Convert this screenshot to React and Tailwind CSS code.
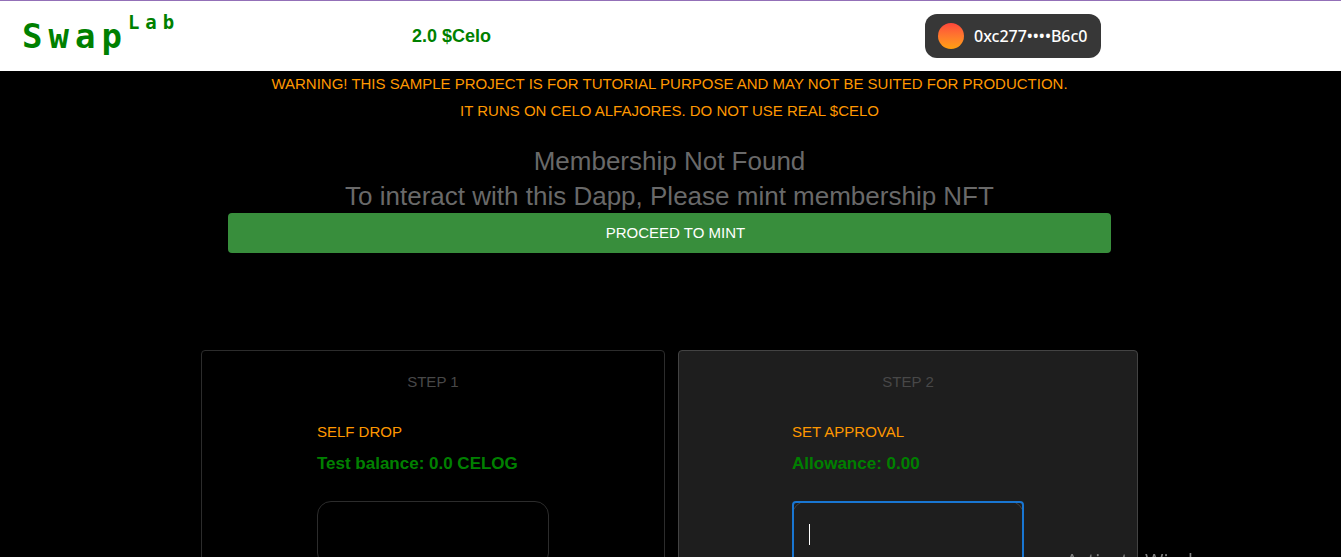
function Header() {
  return (
    <header className="grid h-[71px] grid-cols-[412fr_513fr_416fr] items-center border-t border-[#9370b8] bg-white">
      <h1 className="flex items-start pl-[22px] font-['DejaVu_Sans_Mono',monospace] text-[34px] leading-[40px] font-bold tracking-[6px] text-[#008000]">
        Swap
        <span className="-mt-2 text-[19px] leading-[28px]">Lab</span>
      </h1>
      <p className="text-lg font-bold text-[#008000]">2.0 $Celo</p>
      <div>
        <button
          type="button"
          className="flex h-11 items-center gap-2.5 rounded-xl bg-[#373737] px-[13px] font-['Noto_Sans',sans-serif] text-base font-medium text-white"
        >
          <span className="size-[26px] rounded-full bg-linear-to-b from-[#ff453a] to-[#ff9f0a]" />
          0xc277••••B6c0
        </button>
      </div>
    </header>
  );
}

function StepCard({ step, title, info, active }) {
  const id = "amount-" + step;
  return (
    <section
      className={
        active
          ? "flex flex-col items-center rounded border border-[#434343] bg-[#1e1e1e] pt-[19px] pb-10"
          : "flex flex-col items-center rounded border border-[#2c2c2c] bg-black pt-[19px] pb-10"
      }
    >
      <h3 className="text-[15px] leading-6 text-[#484848]">STEP {step}</h3>
      <div className="mt-[26px] flex w-[232px] flex-col">
        <label htmlFor={id} className="text-[15px] leading-6 text-[#ff9800]">
          {title}
        </label>
        <p className="mt-2 text-[17px] leading-6 font-bold text-[#008000]">{info}</p>
        <div className="relative mt-[25px]">
          <input
            id={id}
            type="text"
            className={
              active
                ? "h-[66px] w-full rounded-[14px] border border-[#434343] bg-transparent px-4 text-white caret-transparent outline-none"
                : "h-[66px] w-full rounded-[14px] border border-[#2c2c2c] bg-transparent px-4 text-white outline-none"
            }
          />
          {active && (
            <span
              aria-hidden="true"
              className="pointer-events-none absolute inset-0 flex items-center rounded border-2 border-[#1976d2] pl-[15px]"
            >
              <span className="h-[21px] w-px bg-white" />
            </span>
          )}
        </div>
      </div>
    </section>
  );
}

export default function App() {
  return (
    <div className="h-screen overflow-hidden bg-black font-['Liberation_Sans',Arial,sans-serif]">
      <Header />
      <main className="pr-0.5">
        <div className="text-center text-[15px] text-[#ff9800]">
          <p className="leading-[25px]">
            WARNING! THIS SAMPLE PROJECT IS FOR TUTORIAL PURPOSE AND MAY NOT BE SUITED FOR PRODUCTION.
          </p>
          <p className="leading-[29px]">IT RUNS ON CELO ALFAJORES. DO NOT USE REAL $CELO</p>
        </div>
        <div className="mx-auto mt-[19px] w-[66%]">
          <h2 className="text-center text-[26px] leading-[35px] text-[#696969]">
            Membership Not Found
            <br />
            To interact with this Dapp, Please mint membership NFT
          </h2>
          <button
            type="button"
            className="-mt-px flex h-10 w-full items-center justify-center rounded bg-[#388e3c] pl-3 text-[15px] text-white"
          >
            PROCEED TO MINT
          </button>
        </div>
        <div className="mx-auto mt-[97px] grid w-[70%] grid-cols-[464fr_460fr] gap-[13px]">
          <StepCard step={1} title="SELF DROP" info="Test balance: 0.0 CELOG" />
          <StepCard step={2} title="SET APPROVAL" info="Allowance: 0.00" active />
        </div>
      </main>
      <div className="pointer-events-none fixed right-[111px] -bottom-[18px] font-['Open_Sans',sans-serif] text-[20px] leading-7 text-[#808080]">
        Activate Windows
      </div>
    </div>
  );
}
